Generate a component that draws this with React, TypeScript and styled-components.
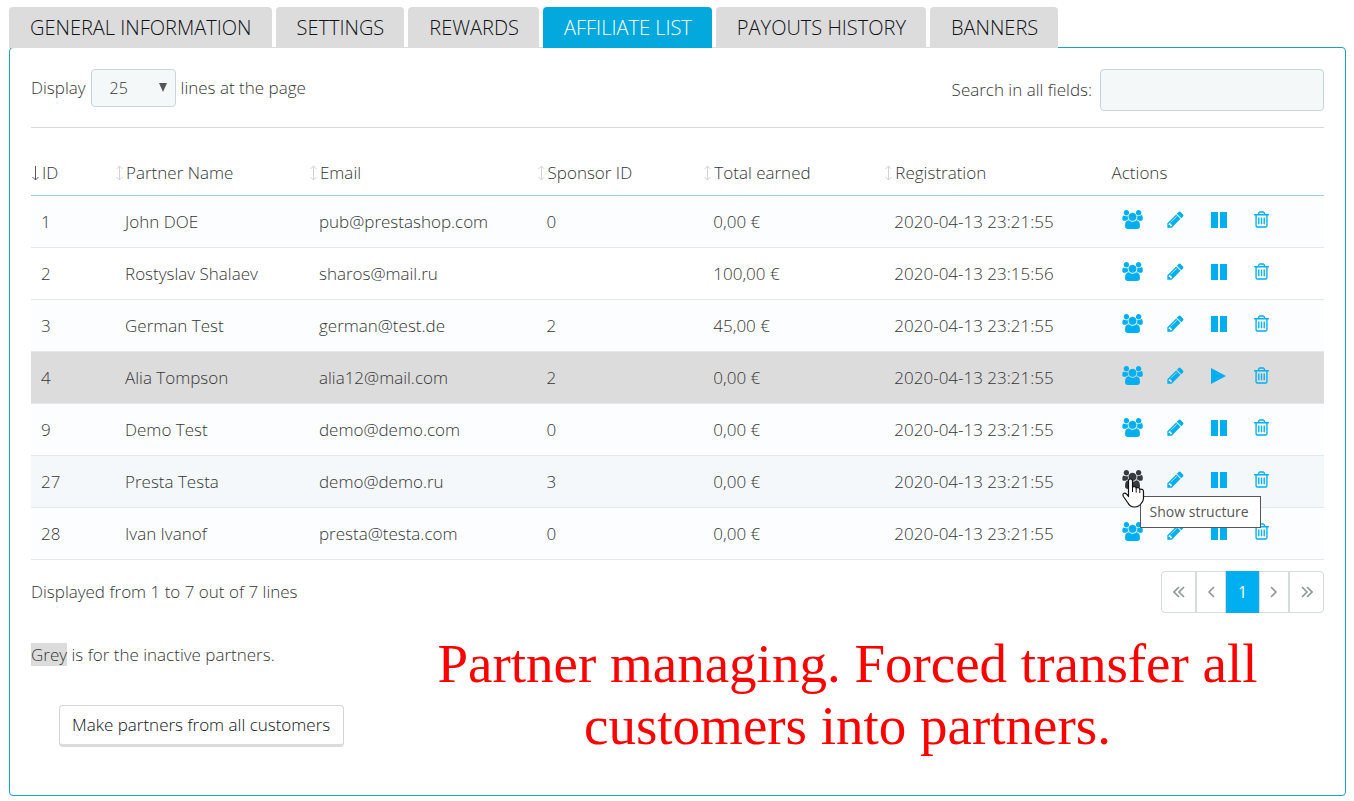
import React from 'react';
import styled, { createGlobalStyle } from 'styled-components';

const GlobalStyle = createGlobalStyle`
  *, *::before, *::after { box-sizing: border-box; }
  body {
    margin: 0;
    background: #fff;
    color: #363636;
    font-family: "Open Sans", sans-serif;
    font-size: 17px;
    font-weight: 300;
    line-height: 24px;
  }
  button, input, select { font: inherit; color: inherit; }
`;

const Page = styled.div`
  padding: 7px 8px 4px 9px;
`;

const Tabs = styled.nav`
  display: flex;
  gap: 4px;
  position: relative;
  z-index: 1;
  width: fit-content;
  margin-bottom: -1px;
  border-bottom: 1px solid #dcdcdc;
`;

const Tab = styled.button<{ $active?: boolean }>`
  height: 41px;
  margin-bottom: -1px;
  padding: 0 20px 0 21px;
  border: 0;
  border-radius: 4px 4px 0 0;
  background: ${(p) => (p.$active ? '#03a9dc' : '#dcdcdc')};
  color: ${(p) => (p.$active ? '#fff' : '#101216')};
  font-size: 20px;
  line-height: 41px;
  white-space: nowrap;
`;

const Panel = styled.main`
  min-height: 749px;
  padding: 21px 21px 28px;
  border: 1px solid #1ba1c4;
  border-radius: 4px;
`;

const Toolbar = styled.div`
  display: flex;
  justify-content: space-between;
  align-items: flex-start;
  padding-bottom: 16px;
  border-bottom: 1px solid #d6dadb;
`;

const LengthControl = styled.label`
  display: flex;
  align-items: center;
  gap: 5px;
`;

const SelectBox = styled.span`
  position: relative;
  display: block;
`;

const Select = styled.select`
  display: block;
  width: 85px;
  height: 38px;
  padding: 0 18px;
  border: 1px solid #c7d6db;
  border-radius: 4px;
  background: #f4f8f9;
  appearance: none;
  font-size: 16px;
`;

const SelectArrow = styled.svg`
  position: absolute;
  top: 14px;
  right: 9px;
  pointer-events: none;
`;

const SearchControl = styled.label`
  display: flex;
  align-items: center;
  gap: 8px;
`;

const SearchInput = styled.input`
  width: 224px;
  height: 42px;
  padding: 0 12px;
  border: 1px solid #c7d6db;
  border-radius: 4px;
  background: #f4f8f9;
`;

const Table = styled.table`
  width: 100%;
  margin-top: 22px;
  border-collapse: separate;
  border-spacing: 0;
  table-layout: fixed;
`;

const Col = styled.col<{ $width?: string }>`
  width: ${(p) => p.$width || 'auto'};
`;

const HeadCell = styled.th<{ $plain?: boolean }>`
  height: 46px;
  padding: 0 ${(p) => (p.$plain ? '10px' : '0')};
  border-bottom: 1px solid #9ccfdc;
  font-weight: 300;
  text-align: left;
`;

const SortButton = styled.button`
  display: flex;
  align-items: center;
  gap: 2px;
  padding: 0;
  border: 0;
  background: none;
  white-space: nowrap;
`;

const Row = styled.tr<{ $tone: string }>`
  background: ${(p) => p.$tone};
`;

const Cell = styled.td`
  height: 52px;
  padding: 0 10px;
  border-bottom: 1px solid #e3e8ec;
  white-space: nowrap;
`;

const Actions = styled.div`
  display: flex;
  gap: 21px;
  padding: 0 10px 4px;
`;

const Action = styled.button<{ $hovered?: boolean }>`
  position: relative;
  display: flex;
  align-items: center;
  justify-content: center;
  width: 22px;
  height: 22px;
  padding: 0;
  border: 0;
  background: none;
  color: ${(p) => (p.$hovered ? '#363a41' : '#00aff0')};
`;

const Cursor = styled.svg`
  position: absolute;
  z-index: 3;
  top: 9px;
  left: 0;
`;

const Tooltip = styled.span`
  position: absolute;
  z-index: 2;
  top: 27px;
  left: 18px;
  padding: 0 11px 0 9px;
  border: 1px solid #575757;
  background: #fff;
  color: #575757;
  font-size: 14px;
  font-weight: 400;
  line-height: 30px;
  white-space: nowrap;
`;

const TableFooter = styled.div`
  display: flex;
  justify-content: space-between;
  align-items: center;
  padding-top: 11px;
`;

const Pagination = styled.nav`
  display: flex;
`;

const PageButton = styled.button<{ $current?: boolean; $wide?: boolean }>`
  display: flex;
  align-items: center;
  justify-content: center;
  width: ${(p) => (p.$wide ? '35px' : p.$current ? '33px' : '30px')};
  height: 42px;
  padding: 0;
  border: 1px solid ${(p) => (p.$current ? '#00aff0' : '#d5dbde')};
  background: ${(p) => (p.$current ? '#00aff0' : '#fff')};
  color: ${(p) => (p.$current ? '#fff' : '#8f9699')};
  font-size: 16px;
  font-weight: 400;
  & + & { border-left-width: ${(p) => (p.$current ? '1px' : '0')}; }
  &:first-child { border-radius: 4px 0 0 4px; }
  &:last-child { border-radius: 0 4px 4px 0; }
`;

const Bottom = styled.div`
  display: flex;
  align-items: flex-start;
  padding-top: 20px;
`;

const Notes = styled.section`
  flex: 0 0 350px;
`;

const Note = styled.p`
  margin: 10px 0 38px;
`;

const Grey = styled.span`
  background: #dcdcdc;
`;

const MakeButton = styled.button`
  height: 42px;
  margin-left: 28px;
  padding: 0 13px 0 12px;
  border: 1px solid #d5d5d5;
  border-bottom: 3px solid #dcdcdc;
  border-radius: 4px;
  background: #fff;
  color: #101216;
  white-space: nowrap;
`;

const Caption = styled.p`
  flex: 1;
  margin: 0;
  padding-right: 10px;
  color: #fd0000;
  font-family: "Liberation Serif", serif;
  font-size: 55px;
  font-weight: 400;
  line-height: 62px;
  text-align: center;
`;

const SortIcon = ({ sorted }: { sorted?: boolean }) => (
  <svg width="9" height="16" viewBox="0 0 9 16" fill="none" stroke={sorted ? '#5a5a5a' : '#d4d4d4'} aria-hidden="true">
    <path d={sorted ? 'M4.5 1V15M1.5 12L4.5 15L7.5 12' : 'M4.5 1V15M1.5 4L4.5 1L7.5 4M1.5 12L4.5 15L7.5 12'} />
  </svg>
);

const UsersIcon = () => (
  <svg width="21" height="19" viewBox="0 0 1920 1792" fill="currentColor" aria-hidden="true">
    <path d="M593 896q-162 5-265 128h-134q-82 0-138-40.5t-56-118.5q0-353 124-353 6 0 43.5 21t97.5 42.5 119 21.5q67 0 133-23-5 37-5 66 0 159 93 289zm1071 637q0 120-73 189.5t-194 69.5h-874q-121 0-194-69.5t-73-189.5q0-53 3.5-103.5t14-109 26.5-108.5 43-97.5 62-81 85.5-53.5 111.5-20q10 0 43 21.5t73 48 107 48 135 21.5 135-21.5 107-48 73-48 43-21.5q61 0 111.5 20t85.5 53.5 62 81 43 97.5 26.5 108.5 14 109 3.5 103.5zm-1024-1277q0 106-75 181t-181 75-181-75-75-181 75-181 181-75 181 75 75 181zm704 384q0 159-112.5 271.5t-271.5 112.5-271.5-112.5-112.5-271.5 112.5-271.5 271.5-112.5 271.5 112.5 112.5 271.5zm576 225q0 78-56 118.5t-138 40.5h-134q-103-123-265-128 93-130 93-289 0-29-5-66 66 23 133 23 59 0 119-21.5t97.5-42.5 43.5-21q124 0 124 353zm-128-609q0 106-75 181t-181 75-181-75-75-181 75-181 181-75 181 75 75 181z" />
  </svg>
);

const PencilIcon = () => (
  <svg width="19" height="19" viewBox="0 0 1792 1792" fill="currentColor" aria-hidden="true">
    <path d="M491 1536l91-91-235-235-91 91v107h128v128h107zm523-928q0-22-22-22-10 0-17 7l-542 542q-7 7-7 17 0 22 22 22 10 0 17-7l542-542q7-7 7-17zm-54-192l416 416-832 832h-416v-416zm683 96q0 53-37 90l-166 166-416-416 166-165q36-38 90-38 53 0 91 38l235 234q37 39 37 91z" />
  </svg>
);

const TrashIcon = () => (
  <svg width="19" height="19" viewBox="0 0 1792 1792" fill="currentColor" aria-hidden="true">
    <path d="M704 736v576q0 14-9 23t-23 9h-64q-14 0-23-9t-9-23v-576q0-14 9-23t23-9h64q14 0 23 9t9 23zm256 0v576q0 14-9 23t-23 9h-64q-14 0-23-9t-9-23v-576q0-14 9-23t23-9h64q14 0 23 9t9 23zm256 0v576q0 14-9 23t-23 9h-64q-14 0-23-9t-9-23v-576q0-14 9-23t23-9h64q14 0 23 9t9 23zm128 724v-948h-896v948q0 22 7 40.5t14.5 27 10.5 8.5h832q3 0 10.5-8.5t14.5-27 7-40.5zm-672-1076h448l-48-117q-7-9-17-11h-317q-10 2-17 11zm928 32v64q0 14-9 23t-23 9h-96v948q0 83-47 143.5t-113 60.5h-832q-66 0-113-58.5t-47-141.5v-952h-96q-14 0-23-9t-9-23v-64q0-14 9-23t23-9h309l70-167q15-37 54-63t79-26h320q40 0 79 26t54 63l70 167h309q14 0 23 9t9 23z" />
  </svg>
);

const PauseIcon = () => (
  <svg width="16" height="16" viewBox="0 0 16 16" fill="currentColor" aria-hidden="true">
    <path d="M0 0H7V16H0ZM9 0H16V16H9Z" />
  </svg>
);

const PlayIcon = () => (
  <svg width="16" height="16" viewBox="0 0 16 16" fill="currentColor" aria-hidden="true">
    <path d="M0 0L15 8L0 16Z" />
  </svg>
);

const HandCursor = () => (
  <Cursor width="23" height="30" viewBox="0 0 23 30" aria-hidden="true">
    <path
      d="M6.5 3Q6.5 1 8.5 1Q10.5 1 10.5 3V9Q13.6 8 14.2 10Q17.2 9 17.8 11.2Q21.5 10.6 21.5 14V20Q21.5 23 19.5 25Q17 29 12.5 29Q8 29 6 25L1.4 18.5Q0.2 16 2 15.2Q4 14.5 6.5 18.5Z"
      fill="#fff" stroke="#111" strokeWidth="1.2" strokeLinejoin="round"
    />
    <path d="M10.5 9V14M14.2 10V14.5M17.8 11V15" stroke="#111" fill="none" />
  </Cursor>
);

const Chevron = ({ dir, double }: { dir: 'left' | 'right'; double?: boolean }) => (
  <svg width="12" height="12" viewBox="0 0 12 12" fill="none" stroke="currentColor" strokeWidth="1.6" aria-hidden="true">
    {dir === 'left' && <path d={double ? 'M6 1L1 6L6 11M11 1L6 6L11 11' : 'M9 1L4 6L9 11'} />}
    {dir === 'right' && <path d={double ? 'M1 1L6 6L1 11M6 1L11 6L6 11' : 'M3 1L8 6L3 11'} />}
  </svg>
);

const tabs = ['GENERAL INFORMATION', 'SETTINGS', 'REWARDS', 'AFFILIATE LIST', 'PAYOUTS HISTORY', 'BANNERS'];

const columns = [
  { title: 'ID', width: '6.5%' },
  { title: 'Partner Name', width: '15%' },
  { title: 'Email', width: '17.6%' },
  { title: 'Sponsor ID', width: '12.9%' },
  { title: 'Total earned', width: '14%' },
  { title: 'Registration', width: '16.8%' },
];

const partners = [
  { id: 1, name: 'John DOE', email: 'pub@prestashop.com', sponsor: '0', earned: '0,00 €', date: '2020-04-13 23:21:55' },
  { id: 2, name: 'Rostyslav Shalaev', email: 'sharos@mail.ru', sponsor: '', earned: '100,00 €', date: '2020-04-13 23:15:56' },
  { id: 3, name: 'German Test', email: 'german@test.de', sponsor: '2', earned: '45,00 €', date: '2020-04-13 23:21:55' },
  { id: 4, name: 'Alia Tompson', email: 'alia12@mail.com', sponsor: '2', earned: '0,00 €', date: '2020-04-13 23:21:55', inactive: true },
  { id: 9, name: 'Demo Test', email: 'demo@demo.com', sponsor: '0', earned: '0,00 €', date: '2020-04-13 23:21:55' },
  { id: 27, name: 'Presta Testa', email: 'demo@demo.ru', sponsor: '3', earned: '0,00 €', date: '2020-04-13 23:21:55', hovered: true },
  { id: 28, name: 'Ivan Ivanof', email: 'presta@testa.com', sponsor: '0', earned: '0,00 €', date: '2020-04-13 23:21:55' },
];

const rowTone = (index: number, inactive?: boolean, hovered?: boolean) => {
  if (inactive) return '#dcdcdc';
  if (hovered) return '#f4f8fb';
  return index % 2 === 0 ? '#fbfdff' : '#fff';
};

export default function App() {
  return (
    <>
      <GlobalStyle />
      <Page>
        <Tabs>
          {tabs.map((tab) => (
            <Tab key={tab} $active={tab === 'AFFILIATE LIST'}>{tab}</Tab>
          ))}
        </Tabs>
        <Panel>
          <Toolbar>
            <LengthControl>
              Display
              <SelectBox>
                <Select defaultValue="25">
                  <option>25</option>
                  <option>50</option>
                </Select>
                <SelectArrow width="8" height="9" viewBox="0 0 8 9" aria-hidden="true">
                  <path d="M0 0H8L4 9Z" fill="#555" />
                </SelectArrow>
              </SelectBox>
              lines at the page
            </LengthControl>
            <SearchControl>
              Search in all fields:
              <SearchInput type="search" />
            </SearchControl>
          </Toolbar>
          <Table>
            <colgroup>
              {columns.map((c) => <Col key={c.title} $width={c.width} />)}
              <Col />
            </colgroup>
            <thead>
              <tr>
                {columns.map((c, i) => (
                  <HeadCell key={c.title}>
                    <SortButton><SortIcon sorted={i === 0} />{c.title}</SortButton>
                  </HeadCell>
                ))}
                <HeadCell $plain>Actions</HeadCell>
              </tr>
            </thead>
            <tbody>
              {partners.map((p, i) => (
                <Row key={p.id} $tone={rowTone(i, p.inactive, p.hovered)}>
                  <Cell>{p.id}</Cell>
                  <Cell>{p.name}</Cell>
                  <Cell>{p.email}</Cell>
                  <Cell>{p.sponsor}</Cell>
                  <Cell>{p.earned}</Cell>
                  <Cell>{p.date}</Cell>
                  <Cell>
                    <Actions>
                      <Action $hovered={p.hovered} aria-label="Show structure">
                        <UsersIcon />
                        {p.hovered && <HandCursor />}
                        {p.hovered && <Tooltip role="tooltip">Show structure</Tooltip>}
                      </Action>
                      <Action aria-label="Edit"><PencilIcon /></Action>
                      <Action aria-label={p.inactive ? 'Activate' : 'Pause'}>
                        {p.inactive ? <PlayIcon /> : <PauseIcon />}
                      </Action>
                      <Action aria-label="Delete"><TrashIcon /></Action>
                    </Actions>
                  </Cell>
                </Row>
              ))}
            </tbody>
          </Table>
          <TableFooter>
            <span>Displayed from 1 to 7 out of 7 lines</span>
            <Pagination aria-label="Pages">
              <PageButton $wide aria-label="First"><Chevron dir="left" double /></PageButton>
              <PageButton aria-label="Previous"><Chevron dir="left" /></PageButton>
              <PageButton $current>1</PageButton>
              <PageButton aria-label="Next"><Chevron dir="right" /></PageButton>
              <PageButton $wide aria-label="Last"><Chevron dir="right" double /></PageButton>
            </Pagination>
          </TableFooter>
          <Bottom>
            <Notes>
              <Note><Grey>Grey</Grey> is for the inactive partners.</Note>
              <MakeButton>Make partners from all customers</MakeButton>
            </Notes>
            <Caption>Partner managing. Forced transfer all customers into partners.</Caption>
          </Bottom>
        </Panel>
      </Page>
    </>
  );
}
